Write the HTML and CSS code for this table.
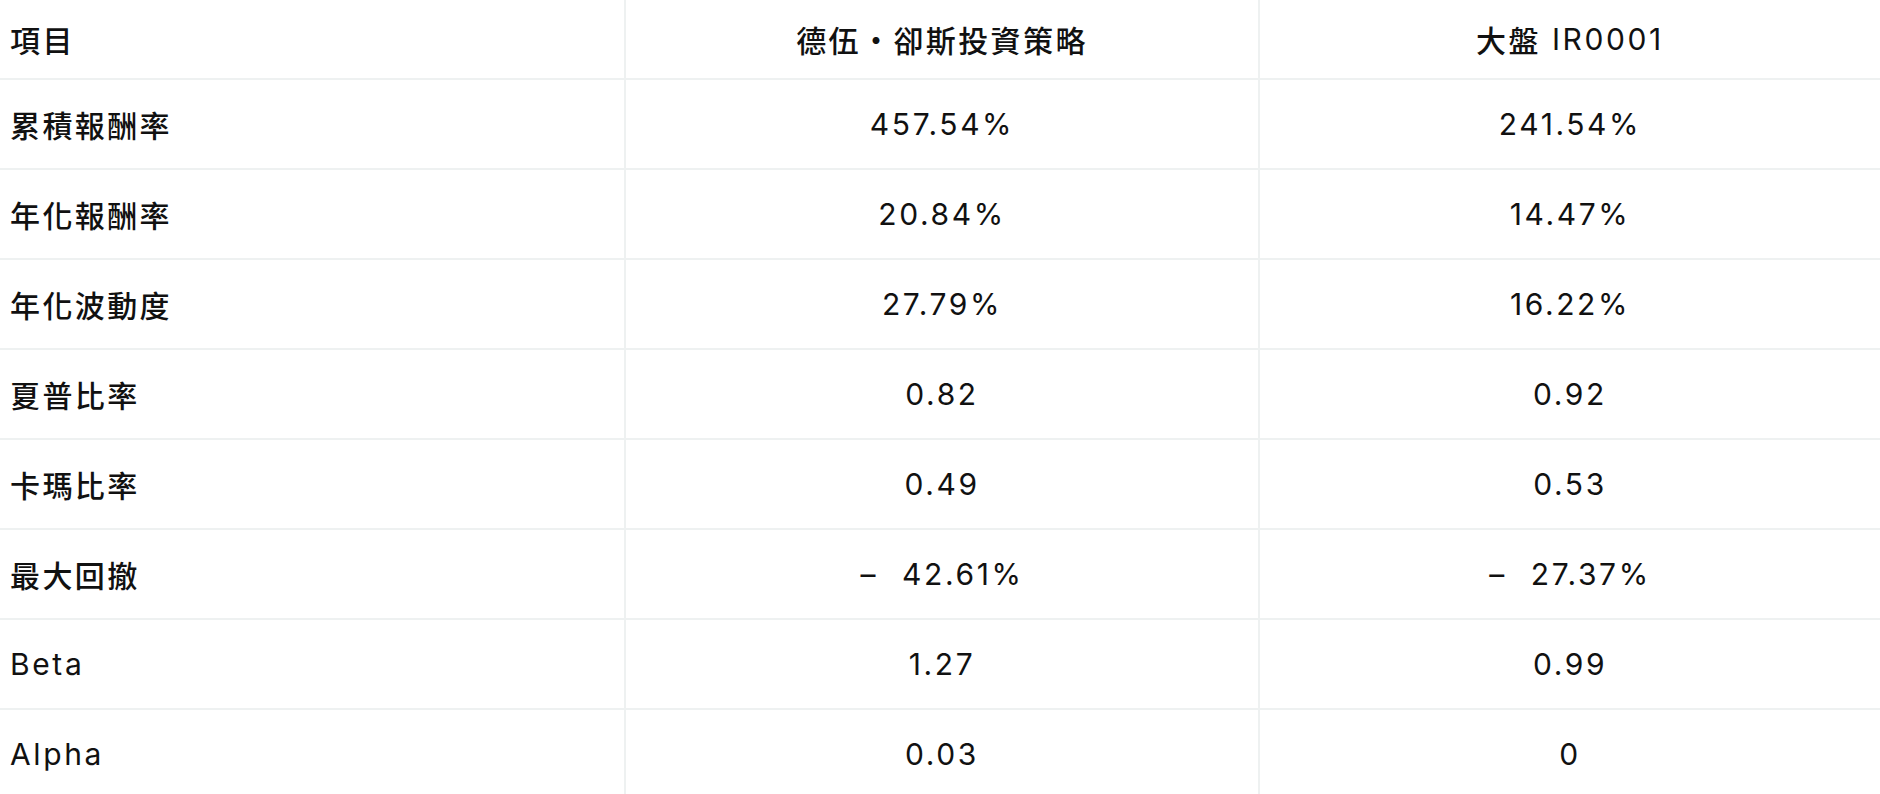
FILE: index.html
```html
<!DOCTYPE html>
<html lang="zh-Hant">
<head>
<meta charset="utf-8">
<title>績效比較</title>
<link rel="stylesheet" href="styles.css">
</head>
<body>
<div class="table">
  <div class="cell head label"><span class="cjk">項目</span></div>
  <div class="cell head col"><span class="cjk">德伍・卻斯投資策略</span></div>
  <div class="cell head col"><span class="cjk">大盤</span>&nbsp;IR0001</div>

  <div class="cell label"><span class="cjk">累積報酬率</span></div>
  <div class="cell col">457.54%</div>
  <div class="cell col">241.54%</div>

  <div class="cell label"><span class="cjk">年化報酬率</span></div>
  <div class="cell col">20.84%</div>
  <div class="cell col">14.47%</div>

  <div class="cell label"><span class="cjk">年化波動度</span></div>
  <div class="cell col">27.79%</div>
  <div class="cell col">16.22%</div>

  <div class="cell label"><span class="cjk">夏普比率</span></div>
  <div class="cell col">0.82</div>
  <div class="cell col">0.92</div>

  <div class="cell label"><span class="cjk">卡瑪比率</span></div>
  <div class="cell col">0.49</div>
  <div class="cell col">0.53</div>

  <div class="cell label"><span class="cjk">最大回撤</span></div>
  <div class="cell col"><span class="neg">–</span>42.61%</div>
  <div class="cell col"><span class="neg">–</span>27.37%</div>

  <div class="cell label">Beta</div>
  <div class="cell col">1.27</div>
  <div class="cell col">0.99</div>

  <div class="cell label">Alpha</div>
  <div class="cell col">0.03</div>
  <div class="cell col">0</div>
</div>
</body>
</html>
```

FILE: styles.css
```css
html, body {
  margin: 0;
  padding: 0;
  background: #ffffff;
}

body {
  font-family: "Inter", "Noto Sans CJK TC", sans-serif;
  font-size: 30px;
  letter-spacing: 2.6px;
  color: #111111;
}

.table {
  display: grid;
  grid-template-columns: 624px 634px 1fr;
  grid-template-rows: 80px;
  grid-auto-rows: 90px;
}

.cell {
  display: flex;
  align-items: center;
  box-sizing: border-box;
  border-bottom: 2px solid #eef1f1;
  white-space: nowrap;
}

.cjk {
  font-family: "Noto Sans CJK TC", sans-serif;
  font-weight: 500;
  letter-spacing: 2.4px;
}

.label {
  padding-left: 10px;
}

.col {
  justify-content: center;
  border-left: 2px solid #eef1f1;
}

.neg {
  margin-right: 24px;
}
```
